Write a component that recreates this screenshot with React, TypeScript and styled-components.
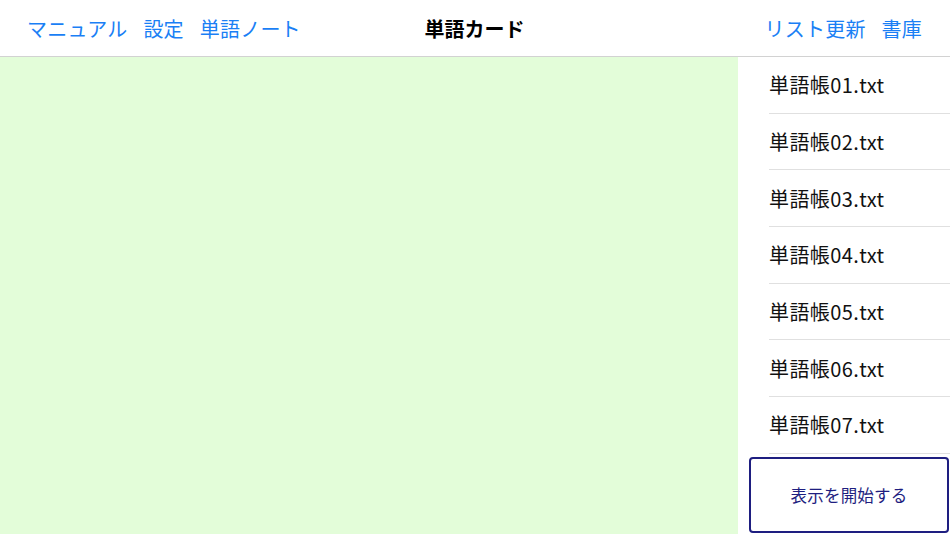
import styled, { createGlobalStyle } from 'styled-components'

const GlobalStyle = createGlobalStyle`
  html, body {
    margin: 0;
    padding: 0;
    background: #ffffff;
    font-family: "Noto Sans CJK JP", "Noto Sans", sans-serif;
  }
`

const Screen = styled.div`
  width: 950px;
  height: 534px;
  display: flex;
  flex-direction: column;
  overflow: hidden;
`

const NavBar = styled.header`
  height: 57px;
  flex: none;
  box-sizing: border-box;
  border-bottom: 1px solid #d2d2d2;
  display: grid;
  grid-template-columns: 1fr auto 1fr;
  align-items: center;
  padding: 0 28px 0 27px;
`

const NavGroup = styled.div<{ $end?: boolean }>`
  display: flex;
  gap: 16px;
  justify-content: ${p => (p.$end ? 'flex-end' : 'flex-start')};
`

const NavLink = styled.span`
  color: #1a7ff5;
  font-size: 20px;
  letter-spacing: 0.2px;
`

const Title = styled.h1`
  margin: 0;
  font-size: 20px;
  font-weight: 700;
  color: #000;
`

const Body = styled.main`
  flex: 1;
  display: flex;
  min-height: 0;
`

const CardArea = styled.section`
  flex: 1;
  background: #e3fdd9;
`

const Sidebar = styled.aside`
  width: 212px;
  flex: none;
  display: flex;
  flex-direction: column;
  background: #fff;
`

const FileList = styled.ul`
  list-style: none;
  margin: 0;
  padding: 0 0 0 31px;
`

const FileRow = styled.li`
  height: 56.67px;
  box-sizing: border-box;
  border-bottom: 1px solid #e0e0e0;
  display: flex;
  align-items: center;
  font-size: 20px;
  letter-spacing: 0.4px;
  color: #111;
`

const StartButton = styled.button`
  margin: 3px 1px 1px 11px;
  flex: 1;
  background: #fff;
  border: 2px solid #1e1e80;
  border-radius: 4px;
  color: #1e1e80;
  font-family: inherit;
  font-size: 16.5px;
  letter-spacing: 0.2px;
`

const files = ['01', '02', '03', '04', '05', '06', '07'].map(n => `単語帳${n}.txt`)

export default function App() {
  return (
    <>
      <GlobalStyle />
      <Screen>
        <NavBar>
          <NavGroup>
            <NavLink>マニュアル</NavLink>
            <NavLink>設定</NavLink>
            <NavLink>単語ノート</NavLink>
          </NavGroup>
          <Title>単語カード</Title>
          <NavGroup $end>
            <NavLink>リスト更新</NavLink>
            <NavLink>書庫</NavLink>
          </NavGroup>
        </NavBar>
        <Body>
          <CardArea />
          <Sidebar>
            <FileList>
              {files.map(f => (
                <FileRow key={f}>{f}</FileRow>
              ))}
            </FileList>
            <StartButton>表示を開始する</StartButton>
          </Sidebar>
        </Body>
      </Screen>
    </>
  )
}
